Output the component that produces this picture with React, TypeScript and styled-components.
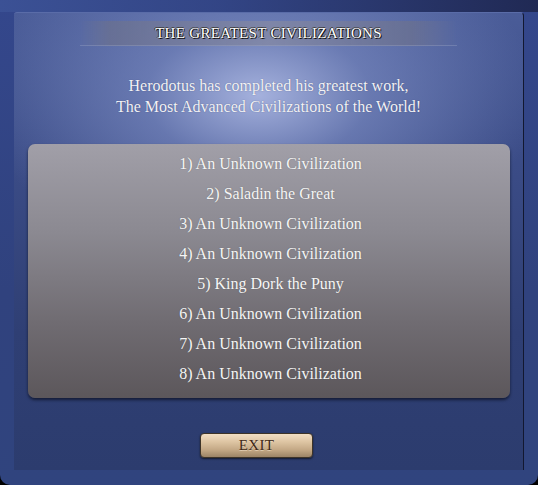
import React from "react";
import styled, { createGlobalStyle } from "styled-components";

const Global = createGlobalStyle`
  html, body { margin: 0; padding: 0; background: #000; }
  body { width: 538px; height: 485px; overflow: hidden; }
`;

const Frame = styled.div`
  width: 538px;
  height: 485px;
  box-sizing: border-box;
  padding: 12px 14px 15px 14px;
  border-radius: 0 0 10px 10px;
  background:
    linear-gradient(90deg, rgba(60, 82, 150, 0.9) 0%, rgba(50, 68, 130, 0.6) 40%, rgba(30, 38, 78, 0.9) 100%) top / 100% 12px no-repeat,
    linear-gradient(180deg, #34478c 0%, #30427e 60%, #30447e 100%);
`;

const Panel = styled.div`
  height: 100%;
  box-sizing: border-box;
  display: flex;
  flex-direction: column;
  align-items: stretch;
  padding: 8px 0 0 0;
  border-radius: 3px 4px 0 0;
  border-top: 1px solid #5a6ca8;
  border-right: 1px solid #121830;
  background:
    radial-gradient(ellipse 280px 170px at 48% 18%, rgba(170, 182, 225, 0.95) 0%, rgba(130, 146, 200, 0.6) 40%, rgba(90, 108, 170, 0) 100%),
    linear-gradient(180deg, #4a5c98 0%, #3c4d88 30%, #2f3f74 70%, #2c3c6e 100%);
  font-family: "Liberation Serif", "DejaVu Serif", serif;
  color: #f4f4f6;
`;

const TitleBar = styled.div`
  height: 24px;
  margin: 0 66px 0 66px;
  display: flex;
  align-items: center;
  justify-content: center;
  background: linear-gradient(90deg, rgba(90, 98, 135, 0) 0%, rgba(105, 112, 145, 0.8) 8%, rgba(130, 136, 166, 0.85) 50%, rgba(105, 112, 145, 0.8) 88%, rgba(90, 98, 135, 0) 100%);
  border-bottom: 1px solid rgba(170, 178, 210, 0.3);
`;

const Title = styled.h1`
  margin: 0;
  font-family: "Liberation Serif", serif;
  font-weight: normal;
  font-size: 15px;
  letter-spacing: 0.3px;
  color: #ffffff;
  text-shadow: 1px 1px 0 #111, -1px 0 0 #333, 0 -1px 0 #444;
`;

const Intro = styled.p`
  margin: 29px 0 0 0;
  text-align: center;
  font-size: 16px;
  line-height: 21px;
  color: #f2f2f6;
  text-shadow: 0 0 1px rgba(40, 50, 90, 0.6);
`;

const ListBox = styled.ol`
  list-style: none;
  margin: 27px 13px 0 14px;
  padding: 5px 0 9px 0;
  border-radius: 7px;
  background: linear-gradient(180deg, #a19fa8 0%, #8b8991 35%, #706c72 70%, #5c575b 100%);
  box-shadow: 0 2px 3px rgba(10, 14, 30, 0.7);
`;

const Item = styled.li`
  height: 30px;
  line-height: 30px;
  text-align: center;
  padding-left: 3px;
  font-size: 16px;
  color: #f6f6f6;
  text-shadow: 0 0 1px rgba(60, 60, 60, 0.5);
`;

const ExitButton = styled.button`
  align-self: flex-start;
  margin: 35px 0 0 186px;
  width: 113px;
  height: 25px;
  padding: 0;
  border: 1px solid #3e3428;
  border-radius: 4px;
  background: linear-gradient(180deg, #f2dec4 0%, #ddc4a2 35%, #c2a784 70%, #9c8466 100%);
  box-shadow: 0 1px 2px rgba(0, 0, 0, 0.6);
  font-family: "Liberation Serif", serif;
  font-size: 15px;
  color: #3e2818;
  letter-spacing: 0.3px;
  text-shadow: 0 1px 0 rgba(255, 240, 220, 0.5);
  cursor: pointer;
`;

const entries = [
  "1) An Unknown Civilization",
  "2) Saladin the Great",
  "3) An Unknown Civilization",
  "4) An Unknown Civilization",
  "5) King Dork the Puny",
  "6) An Unknown Civilization",
  "7) An Unknown Civilization",
  "8) An Unknown Civilization",
];

export default function App() {
  return (
    <>
      <Global />
      <Frame>
        <Panel>
          <TitleBar>
            <Title>THE GREATEST CIVILIZATIONS</Title>
          </TitleBar>
          <Intro>
            Herodotus has completed his greatest work,
            <br />
            The Most Advanced Civilizations of the World!
          </Intro>
          <ListBox>
            {entries.map((e, i) => (
              <Item key={i}>{e}</Item>
            ))}
          </ListBox>
          <ExitButton>EXIT</ExitButton>
        </Panel>
      </Frame>
    </>
  );
}
